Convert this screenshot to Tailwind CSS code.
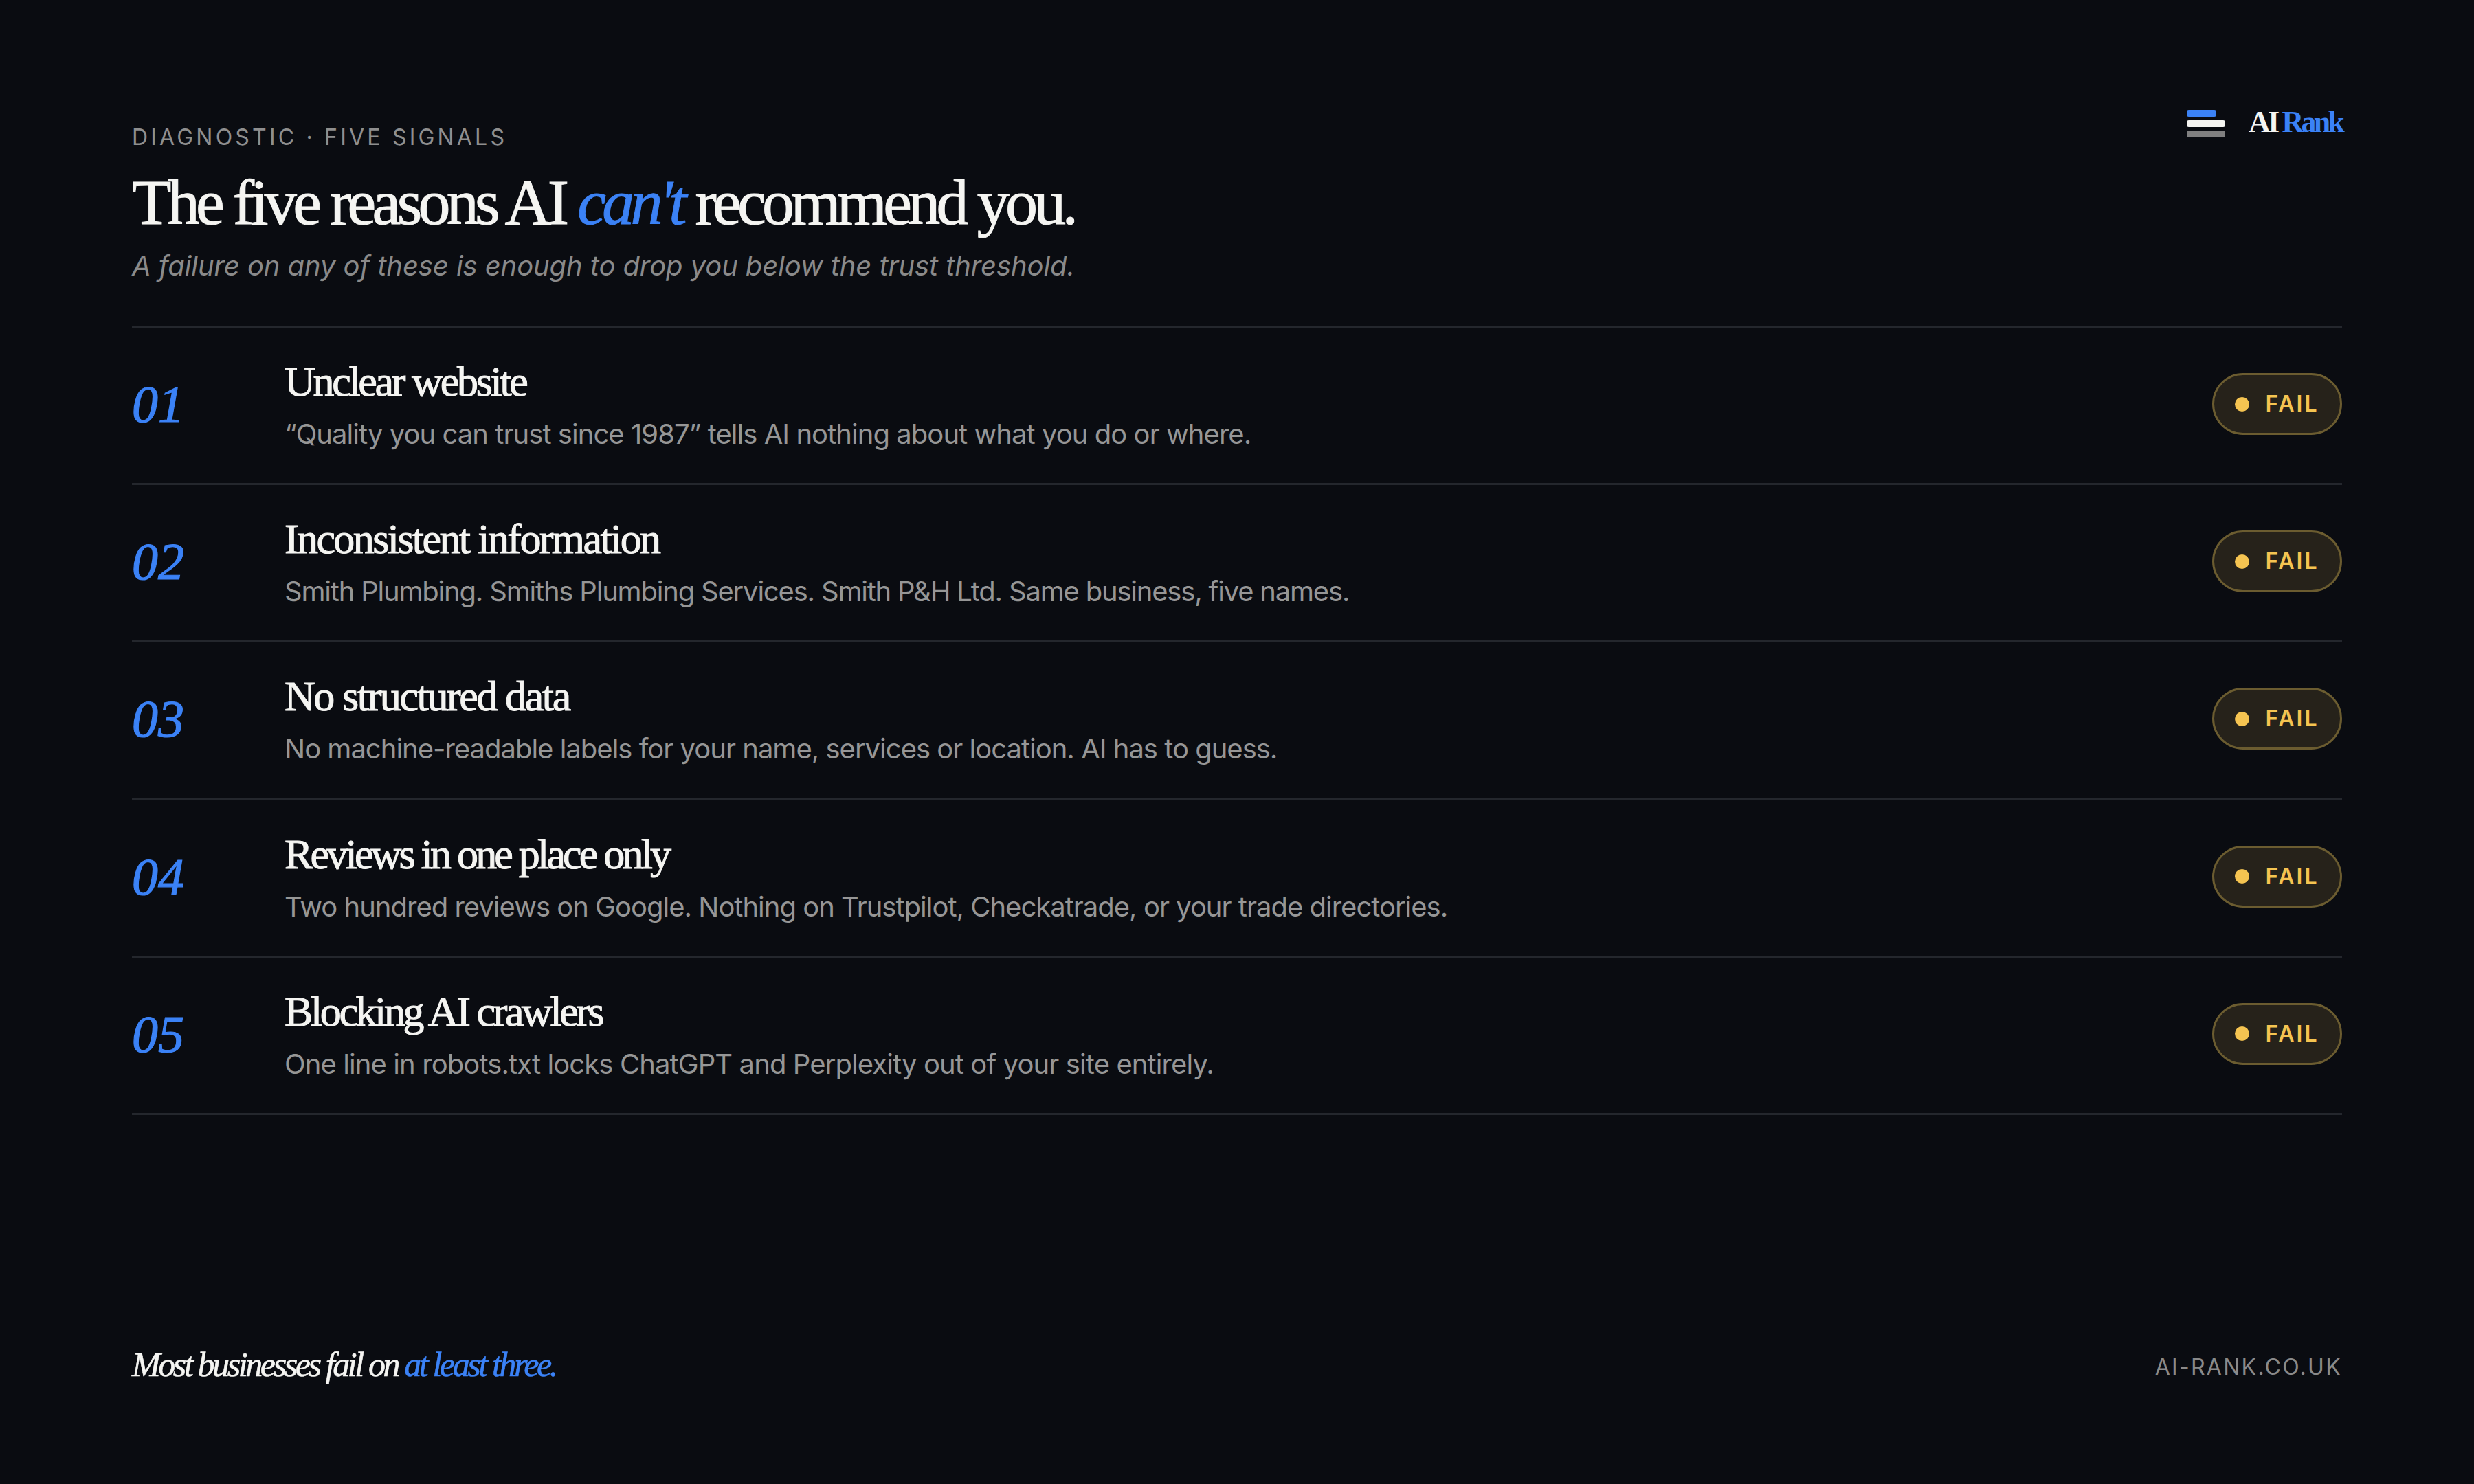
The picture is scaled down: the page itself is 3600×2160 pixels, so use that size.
<!DOCTYPE html>
<html lang="en">
<head>
  <meta charset="UTF-8" />
  <title>AI Rank - Five signals</title>
  <script src="https://cdn.jsdelivr.net/npm/@tailwindcss/browser@4"></script>
</head>
<body class="bg-[#0a0c11] text-[#f5f5f2]">
  <div class="w-[3600px] h-[2160px] flex flex-col px-[192px] font-['Inter',sans-serif]">
    <!-- Header -->
    <header class="flex justify-between items-start pt-[156px]">
      <div class="pt-[24px]">
        <div class="text-[32px] leading-[40px] tracking-[4.2px] text-[#8f8f8f]">DIAGNOSTIC · FIVE SIGNALS</div>
        <h1 class="mt-[18px] font-['Liberation_Serif',serif] text-[94px] leading-[112px] tracking-[-5.7px] [-webkit-text-stroke:1px_currentColor]">The five reasons AI <em class="text-[#3b82f6]">can't</em> recommend you.</h1>
        <p class="mt-[12px] text-[40px] leading-[50px] tracking-[-0.1px] italic text-[#8a8a8a]">A failure on any of these is enough to drop you below the trust threshold.</p>
      </div>
      <div class="flex items-start gap-[34px]">
        <div class="mt-[4px] flex flex-col gap-[5px] w-[56px]">
          <div class="h-[10px] w-[43px] rounded-[3px] bg-[#3b82f6]"></div>
          <div class="h-[10px] rounded-[3px] bg-[#f5f5f2]"></div>
          <div class="h-[10px] rounded-[3px] bg-[#808080]"></div>
        </div>
        <div class="font-['Liberation_Serif',serif] font-bold text-[44px] leading-[44px] tracking-[-3.8px]">AI <span class="text-[#3b82f6]">Rank</span></div>
      </div>
    </header>

    <!-- Signals -->
    <div class="mt-[62px] border-t-[3px] border-[#24272d]">
      <div class="h-[229.2px] flex items-center border-b-[3px] border-[#24272d]">
        <div class="w-[222px] pb-[4px] font-['Liberation_Serif',serif] italic text-[76px] text-[#3b82f6] [-webkit-text-stroke:1.2px_currentColor]">01</div>
        <div class="flex-1 pb-[4px]">
          <div class="font-['Liberation_Serif',serif] text-[62px] leading-[74px] tracking-[-3.3px] [-webkit-text-stroke:1px_currentColor]">Unclear website</div>
          <div class="mt-[14px] text-[40px] leading-[52px] tracking-[-0.95px] text-[#969696]">“Quality you can trust since 1987” tells AI nothing about what you do or where.</div>
        </div>
        <div class="mb-[4px] w-[189px] h-[90px] flex items-center justify-center gap-[23px] rounded-full border-[3px] border-[#6b5c30] bg-[#26221a] text-[#f5c451]">
          <span class="size-[21px] rounded-full bg-[#f5c451]"></span>
          <span class="text-[32px] font-semibold tracking-[3px]">FAIL</span>
        </div>
      </div>
      <div class="h-[229.2px] flex items-center border-b-[3px] border-[#24272d]">
        <div class="w-[222px] pb-[4px] font-['Liberation_Serif',serif] italic text-[76px] text-[#3b82f6] [-webkit-text-stroke:1.2px_currentColor]">02</div>
        <div class="flex-1 pb-[4px]">
          <div class="font-['Liberation_Serif',serif] text-[62px] leading-[74px] tracking-[-2.6px] [-webkit-text-stroke:1px_currentColor]">Inconsistent information</div>
          <div class="mt-[14px] text-[40px] leading-[52px] tracking-[-1.2px] text-[#969696]">Smith Plumbing. Smiths Plumbing Services. Smith P&amp;H Ltd. Same business, five names.</div>
        </div>
        <div class="mb-[4px] w-[189px] h-[90px] flex items-center justify-center gap-[23px] rounded-full border-[3px] border-[#6b5c30] bg-[#26221a] text-[#f5c451]">
          <span class="size-[21px] rounded-full bg-[#f5c451]"></span>
          <span class="text-[32px] font-semibold tracking-[3px]">FAIL</span>
        </div>
      </div>
      <div class="h-[229.2px] flex items-center border-b-[3px] border-[#24272d]">
        <div class="w-[222px] pb-[4px] font-['Liberation_Serif',serif] italic text-[76px] text-[#3b82f6] [-webkit-text-stroke:1.2px_currentColor]">03</div>
        <div class="flex-1 pb-[4px]">
          <div class="font-['Liberation_Serif',serif] text-[62px] leading-[74px] tracking-[-2.4px] [-webkit-text-stroke:1px_currentColor]">No structured data</div>
          <div class="mt-[14px] text-[40px] leading-[52px] tracking-[-1px] text-[#969696]">No machine-readable labels for your name, services or location. AI has to guess.</div>
        </div>
        <div class="mb-[4px] w-[189px] h-[90px] flex items-center justify-center gap-[23px] rounded-full border-[3px] border-[#6b5c30] bg-[#26221a] text-[#f5c451]">
          <span class="size-[21px] rounded-full bg-[#f5c451]"></span>
          <span class="text-[32px] font-semibold tracking-[3px]">FAIL</span>
        </div>
      </div>
      <div class="h-[229.2px] flex items-center border-b-[3px] border-[#24272d]">
        <div class="w-[222px] pb-[4px] font-['Liberation_Serif',serif] italic text-[76px] text-[#3b82f6] [-webkit-text-stroke:1.2px_currentColor]">04</div>
        <div class="flex-1 pb-[4px]">
          <div class="font-['Liberation_Serif',serif] text-[62px] leading-[74px] tracking-[-3.8px] [-webkit-text-stroke:1px_currentColor]">Reviews in one place only</div>
          <div class="mt-[14px] text-[40px] leading-[52px] tracking-[-1px] text-[#969696]">Two hundred reviews on Google. Nothing on Trustpilot, Checkatrade, or your trade directories.</div>
        </div>
        <div class="mb-[4px] w-[189px] h-[90px] flex items-center justify-center gap-[23px] rounded-full border-[3px] border-[#6b5c30] bg-[#26221a] text-[#f5c451]">
          <span class="size-[21px] rounded-full bg-[#f5c451]"></span>
          <span class="text-[32px] font-semibold tracking-[3px]">FAIL</span>
        </div>
      </div>
      <div class="h-[229.2px] flex items-center border-b-[3px] border-[#24272d]">
        <div class="w-[222px] pb-[4px] font-['Liberation_Serif',serif] italic text-[76px] text-[#3b82f6] [-webkit-text-stroke:1.2px_currentColor]">05</div>
        <div class="flex-1 pb-[4px]">
          <div class="font-['Liberation_Serif',serif] text-[62px] leading-[74px] tracking-[-3.4px] [-webkit-text-stroke:1px_currentColor]">Blocking AI crawlers</div>
          <div class="mt-[14px] text-[40px] leading-[52px] tracking-[-0.9px] text-[#969696]">One line in robots.txt locks ChatGPT and Perplexity out of your site entirely.</div>
        </div>
        <div class="mb-[4px] w-[189px] h-[90px] flex items-center justify-center gap-[23px] rounded-full border-[3px] border-[#6b5c30] bg-[#26221a] text-[#f5c451]">
          <span class="size-[21px] rounded-full bg-[#f5c451]"></span>
          <span class="text-[32px] font-semibold tracking-[3px]">FAIL</span>
        </div>
      </div>
    </div>

    <!-- Footer -->
    <footer class="mt-auto pb-[144px] flex justify-between items-end">
      <div class="font-['Liberation_Serif',serif] italic text-[50px] leading-[60px] tracking-[-3.4px] [-webkit-text-stroke:0.6px_currentColor]">Most businesses fail on <span class="text-[#3b82f6]">at least three.</span></div>
      <div class="mb-[6px] text-[32px] leading-[40px] tracking-[2.3px] text-[#8a8a8a]">AI-RANK.CO.UK</div>
    </footer>
  </div>
</body>
</html>
